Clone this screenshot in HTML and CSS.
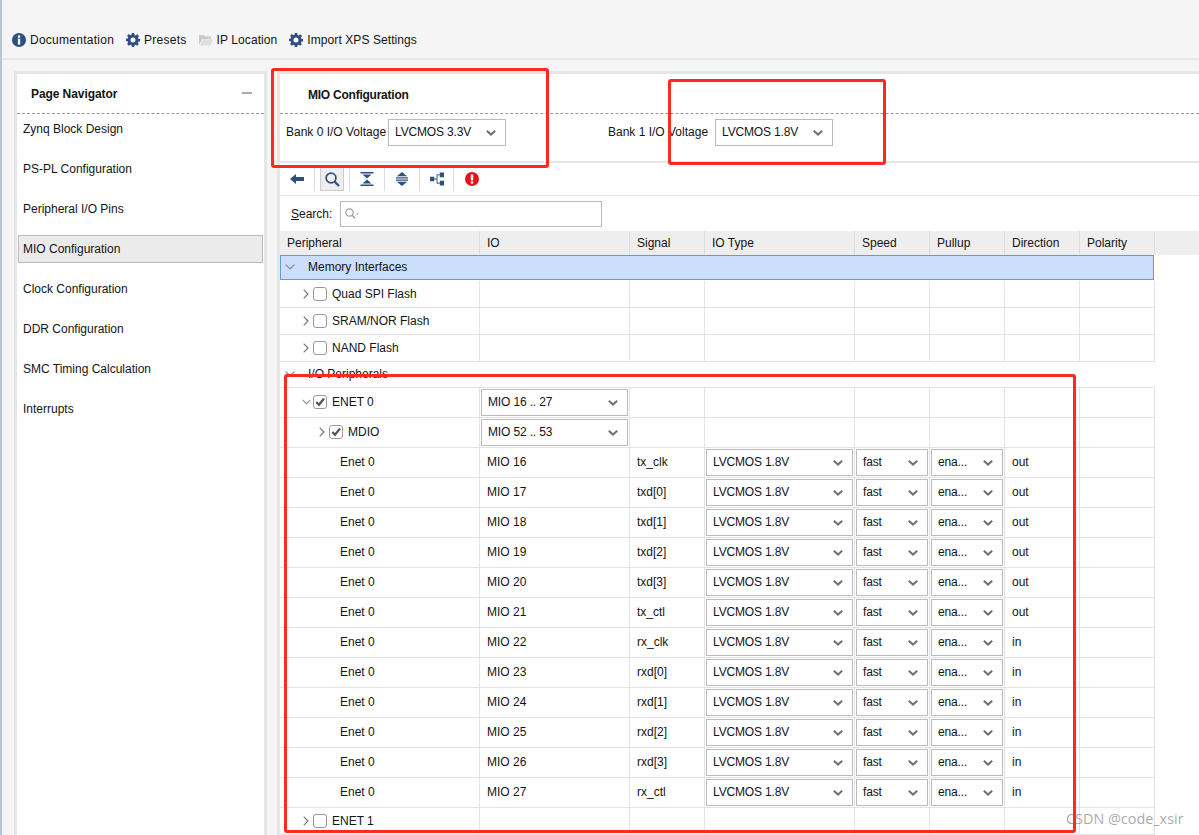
FILE: index.html
```html
<!DOCTYPE html>
<html lang="en">
<head>
<meta charset="utf-8">
<title>MIO Configuration</title>
<link rel="stylesheet" href="styles.css">
</head>
<body>
<svg class="defs" width="0" height="0" aria-hidden="true">
  <defs>
    <symbol id="gear" viewBox="0 0 14 14">
      <path fill="#2f4f80" d="M5.8 0h2.4l.3 1.9 1.2.5L11.300 1.300 13 3l-1.100 1.500.5 1.300 1.600.2v2.400l-1.700.3-.5 1.200L12.900 11 11.200 12.700l-1.500-1-1.200.5L8.200 14H5.800l-.3-1.800-1.200-.5-1.500 1L1.100 11l1-1.500-.5-1.200L0 8V5.700l1.700-.2.500-1.300L1.100 2.800 2.800 1.100 4.300 2.200l1.200-.5zM7 4.500A2.500 2.500 0 1 0 7 9.500 2.500 2.500 0 1 0 7 4.500z" fill-rule="evenodd"/>
    </symbol>
    <symbol id="chev" viewBox="0 0 10 6">
      <path d="M.8.8 5 4.600 9.200.8" fill="none" stroke="#707070" stroke-width="2"/>
    </symbol>
    <symbol id="tright" viewBox="0 0 6 10">
      <path d="M.7.7 5 5 .7 9.300" fill="none" stroke="#777" stroke-width="1.200"/>
    </symbol>
    <symbol id="tdown" viewBox="0 0 10 6">
      <path d="M.7.7 5 5 9.300.7" fill="none" stroke="#8a8a8a" stroke-width="1.200"/>
    </symbol>
    <symbol id="tick" viewBox="0 0 10 10">
      <path d="M1.300 5 4 7.800 9 1.500" fill="none" stroke="#555" stroke-width="2.200"/>
    </symbol>
  </defs>
</svg>

<div class="app">
  <header class="topbar">
    <div class="topitem wide">
      <svg class="topicon" viewBox="0 0 14 14"><circle cx="7" cy="7" r="7" fill="#2f4f80"/><rect x="5.900" y="2.400" width="2.300" height="2.200" fill="#fff"/><rect x="5.900" y="5.600" width="2.300" height="6" fill="#fff"/></svg>
      <span>Documentation</span>
    </div>
    <div class="topitem wide"><svg class="topicon"><use href="#gear"/></svg><span>Presets</span></div>
    <div class="topitem">
      <svg class="topicon" viewBox="0 0 14 14"><path fill="#c9c9c9" d="M0 2h5l1 1.500h6V6H3L0 12z"/><path fill="#dedede" d="M3.300 6.500H14L11.500 12.500H.5z"/></svg>
      <span>IP Location</span>
    </div>
    <div class="topitem"><svg class="topicon"><use href="#gear"/></svg><span>Import XPS Settings</span></div>
  </header>

  <div class="content">
    <aside class="nav">
      <div class="nav-head"><b>Page Navigator</b><i class="minus"></i></div>
      <ul class="nav-list">
        <li>Zynq Block Design</li>
        <li>PS-PL Configuration</li>
        <li>Peripheral I/O Pins</li>
        <li class="current">MIO Configuration</li>
        <li>Clock Configuration</li>
        <li>DDR Configuration</li>
        <li>SMC Timing Calculation</li>
        <li>Interrupts</li>
      </ul>
    </aside>

    <main class="main">
      <div class="main-head"><b>MIO Configuration</b></div>
      <div class="voltage">
        <span class="bank0">Bank 0 I/O Voltage</span>
        <div class="select w118"><span>LVCMOS 3.3V</span><svg class="chev"><use href="#chev"/></svg></div>
        <span class="bank1">Bank 1 I/O Voltage</span>
        <div class="select w118"><span>LVCMOS 1.8V</span><svg class="chev"><use href="#chev"/></svg></div>
      </div>

      <div class="tools">
        <div class="tool first"><svg class="ticon" viewBox="0 0 14 10"><path fill="#2f4f80" d="M0 5 6 0v3h8v4H6v3z"/></svg></div>
        <div class="tool"><div class="pressed"><svg class="ticon big" viewBox="0 0 15 15"><circle cx="6" cy="6" r="4.900" fill="none" stroke="#2f4f80" stroke-width="1.700"/><path d="M9.500 9.500 14 14" stroke="#2f4f80" stroke-width="2.200"/></svg></div></div>
        <div class="tool"><svg class="ticon" viewBox="0 0 13 14"><path fill="#2f4f80" d="M0 0h13v1.500H0zM2 2.500h9L6.500 6.500zM6.500 7.500 11 11.500H2zM0 12.500h13V14H0z"/></svg></div>
        <div class="tool"><svg class="ticon" viewBox="0 0 13 15"><path fill="#2f4f80" d="M6.500 0 12 4.500H1zM0 5.700h13v1.300H0zM0 8h13v1.300H0zM1 10.500h11L6.500 15z"/></svg></div>
        <div class="tool narrow"><svg class="ticon" viewBox="0 0 15 14"><path fill="none" stroke="#2f4f80" d="M4 7h3.500M7.500 2.500h3M7.500 11.500h3M7.500 2.500v9"/><path fill="#2f4f80" d="M0 4.500h4.500v5H0zM10.500 0H15v5h-4.500zM10.500 9H15v5h-4.500z"/></svg></div>
        <div class="tool last"><svg class="ticon" viewBox="0 0 14 14"><circle cx="7" cy="7" r="7" fill="#e0141c"/><rect x="5.800" y="2.500" width="2.400" height="5.800" fill="#fff"/><rect x="5.800" y="9.300" width="2.400" height="2.300" fill="#fff"/></svg></div>
      </div>

      <div class="search">
        <label><u>S</u>earch:</label>
        <div class="search-box">
          <svg class="sicon" viewBox="0 0 14 12"><circle cx="4.500" cy="4.500" r="3.700" fill="none" stroke="#a0a0a0" stroke-width="1.200"/><path d="M7.200 7.200 10 10.500" stroke="#a0a0a0" stroke-width="1.400"/><path d="M11 5.500h3L12.500 7z" fill="#a0a0a0"/></svg>
        </div>
      </div>

      <div class="thead">
        <div class="th">Peripheral</div><div class="th">IO</div><div class="th">Signal</div><div class="th">IO Type</div><div class="th">Speed</div><div class="th">Pullup</div><div class="th">Direction</div><div class="th">Polarity</div>
      </div>

      <div class="group selected"><svg class="tdown"><use href="#tdown"/></svg><span>Memory Interfaces</span></div>

      <div class="row r27">
        <div class="td tree"><svg class="tright"><use href="#tright"/></svg><i class="check"></i><span>Quad SPI Flash</span></div>
        <div class="td"></div><div class="td"></div><div class="td"></div><div class="td"></div><div class="td"></div><div class="td"></div><div class="td"></div>
      </div>
      <div class="row r27">
        <div class="td tree"><svg class="tright"><use href="#tright"/></svg><i class="check"></i><span>SRAM/NOR Flash</span></div>
        <div class="td"></div><div class="td"></div><div class="td"></div><div class="td"></div><div class="td"></div><div class="td"></div><div class="td"></div>
      </div>
      <div class="row r27">
        <div class="td tree"><svg class="tright"><use href="#tright"/></svg><i class="check"></i><span>NAND Flash</span></div>
        <div class="td"></div><div class="td"></div><div class="td"></div><div class="td"></div><div class="td"></div><div class="td"></div><div class="td"></div>
      </div>

      <div class="group"><svg class="tdown"><use href="#tdown"/></svg><span>I/O Peripherals</span></div>

      <div class="row">
        <div class="td tree"><svg class="tdown small"><use href="#tdown"/></svg><i class="check on"><svg class="tick"><use href="#tick"/></svg></i><span>ENET 0</span></div>
        <div class="td sel"><div class="select"><span>MIO 16 .. 27</span><svg class="chev"><use href="#chev"/></svg></div></div>
        <div class="td"></div><div class="td"></div><div class="td"></div><div class="td"></div><div class="td"></div><div class="td"></div>
      </div>
      <div class="row">
        <div class="td tree deep"><svg class="tright"><use href="#tright"/></svg><i class="check on"><svg class="tick"><use href="#tick"/></svg></i><span>MDIO</span></div>
        <div class="td sel"><div class="select"><span>MIO 52 .. 53</span><svg class="chev"><use href="#chev"/></svg></div></div>
        <div class="td"></div><div class="td"></div><div class="td"></div><div class="td"></div><div class="td"></div><div class="td"></div>
      </div>

      <div class="row">
        <div class="td leaf">Enet 0</div><div class="td">MIO 16</div><div class="td">tx_clk</div>
        <div class="td sel"><div class="select"><span>LVCMOS 1.8V</span><svg class="chev"><use href="#chev"/></svg></div></div>
        <div class="td sel"><div class="select"><span>fast</span><svg class="chev"><use href="#chev"/></svg></div></div>
        <div class="td sel"><div class="select"><span>ena...</span><svg class="chev"><use href="#chev"/></svg></div></div>
        <div class="td">out</div><div class="td"></div>
      </div>
      <div class="row">
        <div class="td leaf">Enet 0</div><div class="td">MIO 17</div><div class="td">txd[0]</div>
        <div class="td sel"><div class="select"><span>LVCMOS 1.8V</span><svg class="chev"><use href="#chev"/></svg></div></div>
        <div class="td sel"><div class="select"><span>fast</span><svg class="chev"><use href="#chev"/></svg></div></div>
        <div class="td sel"><div class="select"><span>ena...</span><svg class="chev"><use href="#chev"/></svg></div></div>
        <div class="td">out</div><div class="td"></div>
      </div>
      <div class="row">
        <div class="td leaf">Enet 0</div><div class="td">MIO 18</div><div class="td">txd[1]</div>
        <div class="td sel"><div class="select"><span>LVCMOS 1.8V</span><svg class="chev"><use href="#chev"/></svg></div></div>
        <div class="td sel"><div class="select"><span>fast</span><svg class="chev"><use href="#chev"/></svg></div></div>
        <div class="td sel"><div class="select"><span>ena...</span><svg class="chev"><use href="#chev"/></svg></div></div>
        <div class="td">out</div><div class="td"></div>
      </div>
      <div class="row">
        <div class="td leaf">Enet 0</div><div class="td">MIO 19</div><div class="td">txd[2]</div>
        <div class="td sel"><div class="select"><span>LVCMOS 1.8V</span><svg class="chev"><use href="#chev"/></svg></div></div>
        <div class="td sel"><div class="select"><span>fast</span><svg class="chev"><use href="#chev"/></svg></div></div>
        <div class="td sel"><div class="select"><span>ena...</span><svg class="chev"><use href="#chev"/></svg></div></div>
        <div class="td">out</div><div class="td"></div>
      </div>
      <div class="row">
        <div class="td leaf">Enet 0</div><div class="td">MIO 20</div><div class="td">txd[3]</div>
        <div class="td sel"><div class="select"><span>LVCMOS 1.8V</span><svg class="chev"><use href="#chev"/></svg></div></div>
        <div class="td sel"><div class="select"><span>fast</span><svg class="chev"><use href="#chev"/></svg></div></div>
        <div class="td sel"><div class="select"><span>ena...</span><svg class="chev"><use href="#chev"/></svg></div></div>
        <div class="td">out</div><div class="td"></div>
      </div>
      <div class="row">
        <div class="td leaf">Enet 0</div><div class="td">MIO 21</div><div class="td">tx_ctl</div>
        <div class="td sel"><div class="select"><span>LVCMOS 1.8V</span><svg class="chev"><use href="#chev"/></svg></div></div>
        <div class="td sel"><div class="select"><span>fast</span><svg class="chev"><use href="#chev"/></svg></div></div>
        <div class="td sel"><div class="select"><span>ena...</span><svg class="chev"><use href="#chev"/></svg></div></div>
        <div class="td">out</div><div class="td"></div>
      </div>
      <div class="row">
        <div class="td leaf">Enet 0</div><div class="td">MIO 22</div><div class="td">rx_clk</div>
        <div class="td sel"><div class="select"><span>LVCMOS 1.8V</span><svg class="chev"><use href="#chev"/></svg></div></div>
        <div class="td sel"><div class="select"><span>fast</span><svg class="chev"><use href="#chev"/></svg></div></div>
        <div class="td sel"><div class="select"><span>ena...</span><svg class="chev"><use href="#chev"/></svg></div></div>
        <div class="td">in</div><div class="td"></div>
      </div>
      <div class="row">
        <div class="td leaf">Enet 0</div><div class="td">MIO 23</div><div class="td">rxd[0]</div>
        <div class="td sel"><div class="select"><span>LVCMOS 1.8V</span><svg class="chev"><use href="#chev"/></svg></div></div>
        <div class="td sel"><div class="select"><span>fast</span><svg class="chev"><use href="#chev"/></svg></div></div>
        <div class="td sel"><div class="select"><span>ena...</span><svg class="chev"><use href="#chev"/></svg></div></div>
        <div class="td">in</div><div class="td"></div>
      </div>
      <div class="row">
        <div class="td leaf">Enet 0</div><div class="td">MIO 24</div><div class="td">rxd[1]</div>
        <div class="td sel"><div class="select"><span>LVCMOS 1.8V</span><svg class="chev"><use href="#chev"/></svg></div></div>
        <div class="td sel"><div class="select"><span>fast</span><svg class="chev"><use href="#chev"/></svg></div></div>
        <div class="td sel"><div class="select"><span>ena...</span><svg class="chev"><use href="#chev"/></svg></div></div>
        <div class="td">in</div><div class="td"></div>
      </div>
      <div class="row">
        <div class="td leaf">Enet 0</div><div class="td">MIO 25</div><div class="td">rxd[2]</div>
        <div class="td sel"><div class="select"><span>LVCMOS 1.8V</span><svg class="chev"><use href="#chev"/></svg></div></div>
        <div class="td sel"><div class="select"><span>fast</span><svg class="chev"><use href="#chev"/></svg></div></div>
        <div class="td sel"><div class="select"><span>ena...</span><svg class="chev"><use href="#chev"/></svg></div></div>
        <div class="td">in</div><div class="td"></div>
      </div>
      <div class="row">
        <div class="td leaf">Enet 0</div><div class="td">MIO 26</div><div class="td">rxd[3]</div>
        <div class="td sel"><div class="select"><span>LVCMOS 1.8V</span><svg class="chev"><use href="#chev"/></svg></div></div>
        <div class="td sel"><div class="select"><span>fast</span><svg class="chev"><use href="#chev"/></svg></div></div>
        <div class="td sel"><div class="select"><span>ena...</span><svg class="chev"><use href="#chev"/></svg></div></div>
        <div class="td">in</div><div class="td"></div>
      </div>
      <div class="row">
        <div class="td leaf">Enet 0</div><div class="td">MIO 27</div><div class="td">rx_ctl</div>
        <div class="td sel"><div class="select"><span>LVCMOS 1.8V</span><svg class="chev"><use href="#chev"/></svg></div></div>
        <div class="td sel"><div class="select"><span>fast</span><svg class="chev"><use href="#chev"/></svg></div></div>
        <div class="td sel"><div class="select"><span>ena...</span><svg class="chev"><use href="#chev"/></svg></div></div>
        <div class="td">in</div><div class="td"></div>
      </div>

      <div class="row r27">
        <div class="td tree"><svg class="tright"><use href="#tright"/></svg><i class="check"></i><span>ENET 1</span></div>
        <div class="td"></div><div class="td"></div><div class="td"></div><div class="td"></div><div class="td"></div><div class="td"></div><div class="td"></div>
      </div>
    </main>
  </div>

  <div class="mark mark-a"></div>
  <div class="mark mark-b"></div>
  <div class="mark mark-c"></div>
  <div class="watermark">CSDN @code_xsir</div>
</div>
</body>
</html>
```

FILE: styles.css
```css
* { box-sizing: border-box; }

html, body {
  margin: 0;
  height: 100%;
  overflow: hidden;
}

body {
  background: #f5f5f5;
  color: #141414;
  font-family: "Liberation Sans", Arial, sans-serif;
  font-size: 12px;
}

.defs { position: absolute; }

.app {
  position: relative;
  display: flex;
  flex-direction: column;
  width: 1199px;
  height: 835px;
  overflow: hidden;
  border-left: 2px solid #b9c6d0;
}

/* top toolbar */
.topbar {
  display: flex;
  align-items: center;
  flex: none;
  height: 60px;
  padding: 22px 0 0 10px;
  border-bottom: 2px solid #e8e8e8;
}

.topitem {
  display: flex;
  align-items: center;
  gap: 4px;
  margin-right: 12px;
  letter-spacing: .08px;
}

.topitem.wide { letter-spacing: .26px; }

.topicon { width: 14px; height: 14px; flex: none; }

/* panels */
.content {
  display: flex;
  flex: 1;
  min-height: 0;
  padding: 11px 0 0 12px;
  gap: 10px;
}

.nav {
  flex: none;
  width: 253px;
  background: #fff;
  border: 3px solid #e6e6e6;
  border-bottom: 0;
}

.nav-head {
  display: flex;
  align-items: center;
  justify-content: space-between;
  height: 40px;
  padding: 0 12px 0 14px;
  border-bottom: 1px dashed #999;
  letter-spacing: -.08px;
}

.minus {
  display: block;
  width: 10px;
  height: 1px;
  margin-top: -2px;
  border-top: 2px solid #aaa;
}

.nav-list {
  list-style: none;
  margin: 0;
  padding: 1px 1px 0;
}

.nav-list li {
  display: flex;
  align-items: center;
  height: 28px;
  margin-bottom: 12px;
  padding-left: 4px;
  border: 1px solid transparent;
}

.nav-list li.current {
  background: #ebebeb;
  border-color: #bbb;
}

.main {
  flex: 1;
  min-width: 0;
  background: #fff;
  border-left: 3px solid #e6e6e6;
  border-top: 3px solid #e6e6e6;
}

.main-head {
  display: flex;
  align-items: center;
  height: 40px;
  padding: 2px 0 0 28px;
  border-bottom: 1px dashed #999;
  letter-spacing: -.24px;
}

.voltage {
  display: flex;
  align-items: flex-start;
  height: 49px;
  padding: 5px 0 0 6px;
  border-bottom: 2px solid #e6e6e6;
}

.voltage > span { line-height: 27px; }
.bank0 { width: 102px; }
.bank1 { width: 107px; margin-left: 102px; }

/* drop-downs */
.select {
  display: flex;
  align-items: center;
  justify-content: space-between;
  width: 100%;
  height: 27px;
  padding: 0 9px 2px 6px;
  background: #fff;
  border: 1px solid #bbb;
  letter-spacing: -.15px;
}

.w118 { width: 118px; }

.chev { width: 10px; height: 6px; flex: none; margin-top: 2px; }

/* tools */
.tools {
  display: flex;
  align-items: center;
  height: 33px;
  border-bottom: 1px solid #e6e6e6;
}

.tool {
  display: flex;
  align-items: center;
  justify-content: center;
  width: 35px;
  height: 23px;
  border-right: 1px solid #ddd;
}

.tool.first { padding-right: 1px; }
.tool.narrow { width: 34px; }
.tool.last { border-right: 0; }

.pressed {
  display: flex;
  align-items: center;
  justify-content: center;
  width: 24px;
  height: 24px;
  background: #eee;
  border: 1px solid #ccc;
}

.ticon { width: 14px; height: 14px; }
.ticon.big { width: 15px; height: 15px; }

/* search */
.search {
  display: flex;
  align-items: center;
  gap: 8px;
  height: 35px;
  padding: 0 0 0 11px;
}

.search-box {
  display: flex;
  align-items: center;
  width: 262px;
  height: 26px;
  padding-left: 4px;
  border: 1px solid #bbb;
}

.sicon { width: 14px; height: 12px; }

/* table */
.thead,
.row {
  display: grid;
  grid-template-columns: 200px 150px 75px 150px 75px 75px 75px 75px;
}

.thead {
  width: 100%;
  height: 24px;
  background: #eee;
}

.th {
  display: flex;
  align-items: center;
  padding-left: 7px;
  border-right: 1px solid #ddd;
}

.group {
  display: flex;
  align-items: center;
  width: 875px;
  height: 26px;
  padding-bottom: 2px;
  border-bottom: 1px solid #e3e3e3;
}

.group.selected {
  width: 874px;
  height: 25px;
  margin-bottom: 1px;
  padding-bottom: 1px;
  background: #cbdefb;
  border: 1px solid #5a9fd6;
}

.group.selected .tdown { margin-left: 4px; }

.tdown {
  flex: none;
  width: 10px;
  height: 6px;
  margin: 0 13px 0 5px;
}

.tdown.small { width: 9px; margin: 0 2px 0 -1px; }

.row {
  width: 875px;
  height: 30px;
}

.r27 { height: 27px; }

.td {
  display: flex;
  align-items: center;
  padding: 0 0 2px 7px;
  border-right: 1px solid #e3e3e3;
  border-bottom: 1px solid #e3e3e3;
}

.r27 .td { padding-bottom: 0; }

.td.sel { padding: 1px; align-items: flex-start; }

.td.leaf { padding-left: 60px; }

.td.tree { padding-left: 23px; }
.td.tree.deep { padding-left: 39px; }

.tright {
  flex: none;
  width: 6px;
  height: 10px;
  margin-right: 4px;
}

.check {
  display: flex;
  align-items: center;
  justify-content: center;
  flex: none;
  width: 14px;
  height: 14px;
  margin-right: 5px;
  border: 1px solid #999;
  border-radius: 3px;
  background: #fff;
}

.tick { width: 10px; height: 10px; }

/* annotations drawn over the screenshot */
.mark {
  position: absolute;
  border: 3px solid #fd2a1f;
  border-radius: 3px;
  pointer-events: none;
}

.mark-a { left: 269px; top: 68px; width: 278px; height: 100px; }
.mark-b { left: 666px; top: 79px; width: 218px; height: 86px; }
.mark-c { left: 282px; top: 374px; width: 792px; height: 459px; }

.watermark {
  position: absolute;
  left: 1064px;
  top: 810px;
  color: rgba(110, 110, 110, 0.6);
  font-family: "Open Sans", sans-serif;
  font-size: 14.4px;
  line-height: 18px;
  white-space: nowrap;
}
```
